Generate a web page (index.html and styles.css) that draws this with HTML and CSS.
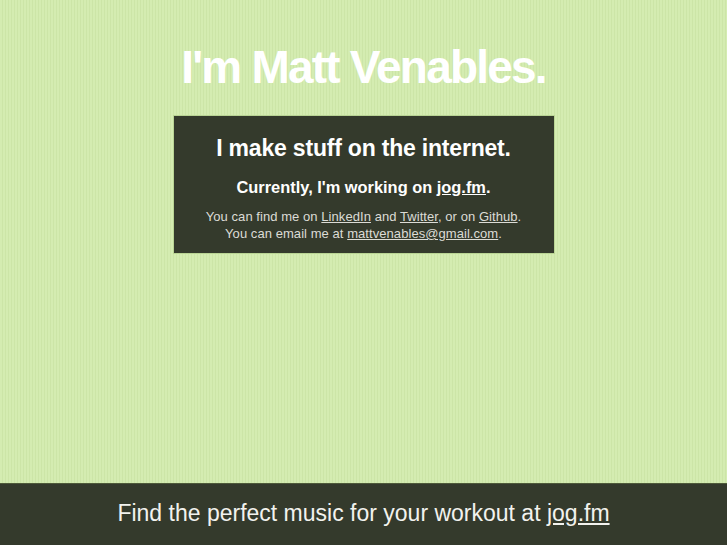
FILE: index.html
```html
<!DOCTYPE html>
<html lang="en">
<head>
<meta charset="utf-8">
<title>I'm Matt Venables.</title>
<link rel="stylesheet" href="styles.css">
</head>
<body>
<div class="page">
  <main class="main">
    <h1 class="name">I'm Matt Venables.</h1>
    <section class="card">
      <h2 class="tagline">I make stuff on the internet.</h2>
      <p class="current">Currently, I'm working on <a href="#">jog.fm</a>.</p>
      <p class="contact">You can find me on <a href="#">LinkedIn</a> and <a href="#">Twitter</a>, or on <a href="#">Github</a>.<br>You can email me at <a href="#">mattvenables@gmail.com</a>.</p>
    </section>
  </main>
  <footer class="footer">Find the perfect music for your workout at <a href="#">jog.fm</a></footer>
</div>
</body>
</html>
```

FILE: styles.css
```css
html, body {
  margin: 0;
  padding: 0;
}
body {
  font-family: "Liberation Sans", Arial, sans-serif;
  background-color: #d1e9ad;
  background-image: repeating-linear-gradient(90deg, #d4ecb1 0, #d4ecb1 2px, #cce5a7 2px, #cce5a7 3px);
  color: #fff;
}
.page {
  min-height: 100vh;
  display: flex;
  flex-direction: column;
}
.main {
  flex: 1;
  display: flex;
  flex-direction: column;
  align-items: center;
}
.name {
  margin: 44px 0 25px;
  font-size: 46px;
  line-height: 46px;
  font-weight: bold;
  letter-spacing: -1.8px;
  color: #fff;
}
.card {
  width: 380px;
  box-sizing: content-box;
  background: #343a2c;
  border: 1px solid #b9d494;
  padding: 18px 0 11px;
  text-align: center;
}
.tagline {
  margin: 0;
  font-size: 23px;
  line-height: 28px;
  font-weight: bold;
  letter-spacing: -0.2px;
}
.current {
  margin: 15px 0 0;
  font-size: 16.4px;
  line-height: 20px;
  font-weight: bold;
}
.contact {
  margin: 11px 0 0;
  font-size: 13px;
  line-height: 17px;
  letter-spacing: 0.06px;
  color: #dcdcd6;
}
.card a, .footer a {
  color: inherit;
}
.footer {
  height: 61px;
  line-height: 59px;
  background: #343a2c;
  border-top: 1px solid #4e5a3a;
  text-align: center;
  font-size: 23px;
  color: #f2f2ee;
}
```
